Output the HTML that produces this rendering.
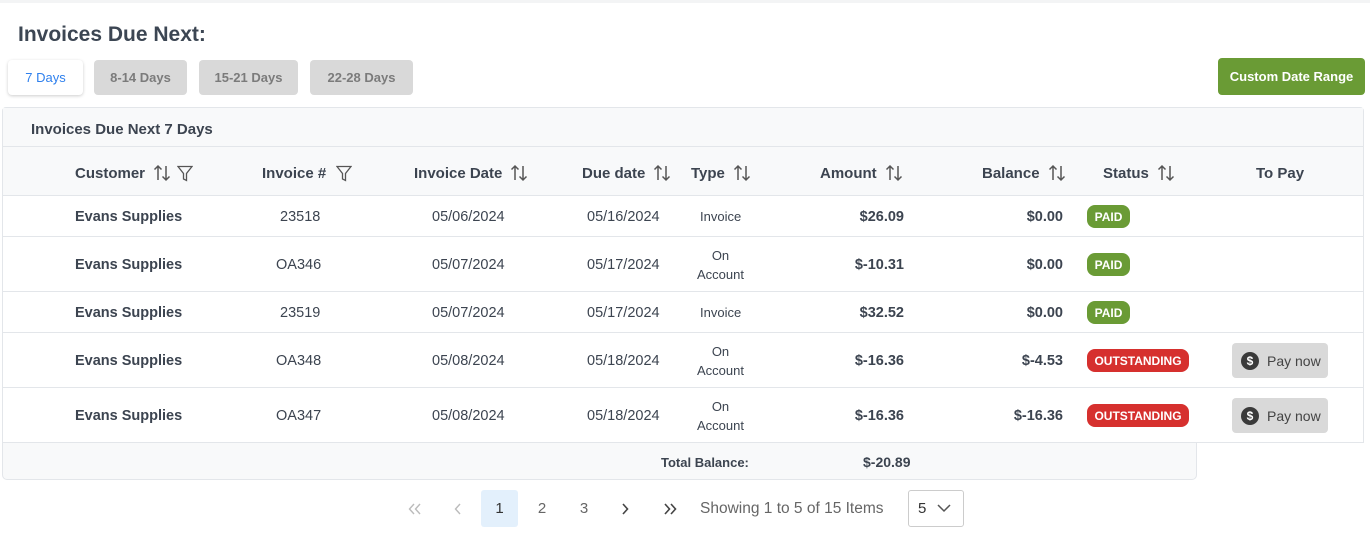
<!DOCTYPE html>
<html><head><meta charset="utf-8"><style>
*{box-sizing:border-box;margin:0;padding:0}
body{width:1370px;height:545px;background:#fff;font-family:"Liberation Sans","DejaVu Sans",sans-serif;color:#3c4450;position:relative;overflow:hidden;font-size:14px}
.a{position:absolute;white-space:nowrap}
.btn{position:absolute;top:60px;height:35px;border-radius:4px;background:#d9d9d9;color:#7b7b7b;font-size:13px;font-weight:bold;display:flex;align-items:center;justify-content:center}
.hline{position:absolute;left:2px;width:1362px;height:1px;background:#e3e6ea}
.th{position:absolute;top:163px;font-weight:bold;font-size:15px;color:#3c4450;white-space:nowrap;display:flex;align-items:center;height:20px}
.c{position:absolute;font-size:14.5px;white-space:nowrap;color:#3c4450}
.r{text-align:right}
.b{font-weight:bold}
.badge{position:absolute;left:1087px;height:23px;border-radius:8px;color:#fff;font-weight:bold;font-size:12px;display:flex;align-items:center;justify-content:center}
.paid{width:43px;background:#6a9b35}
.out{width:102px;background:#d6302e}
.pay{position:absolute;left:1232px;width:96px;height:35px;background:#d9d9d9;border-radius:4px;font-size:14px;color:#444;display:flex;align-items:center;padding-left:9px}
.dol{width:18px;height:18px;border-radius:50%;background:#3a3a3a;color:#fff;font-size:12px;font-weight:bold;display:flex;align-items:center;justify-content:center;margin-right:8px}
.pg{position:absolute;top:490px;height:37px;font-size:15px;color:#666;display:flex;align-items:center;justify-content:center}
svg.s{margin-left:8px}
</style></head><body>
<svg width="0" height="0" style="position:absolute"><defs>
<g id="sort"><path d="M5 16V2M1.5 5.5L5 2l3.5 3.5M13 2v14M9.5 12.5L13 16l3.5-3.5" fill="none" stroke="#555" stroke-width="1.5"/></g>
<g id="filt"><path d="M1 1.5h14L9.5 8.5v7l-3-1.5V8.5z" fill="none" stroke="#555" stroke-width="1.3"/></g>
</defs></svg>
<div class="a" style="left:0;top:0;width:1370px;height:3px;background:#f3f4f5"></div>
<div class="a" style="left:18px;top:23px;font-size:21px;font-weight:bold;color:#3c4653">Invoices Due Next:</div>
<div class="btn" style="left:8px;width:75px;background:#fff;color:#2f80ed;font-weight:normal;box-shadow:0 1px 3px rgba(0,0,0,.2)">7 Days</div>
<div class="btn" style="left:94px;width:93px">8-14 Days</div>
<div class="btn" style="left:199px;width:99px">15-21 Days</div>
<div class="btn" style="left:310px;width:103px">22-28 Days</div>
<div class="btn" style="left:1218px;top:58px;width:147px;height:37px;background:#6a9b35;color:#fff">Custom Date Range</div>

<div class="a" style="left:2px;top:107px;width:1362px;height:336px;border:1px solid #e3e6ea;border-radius:4px 4px 0 0"></div>
<div class="a" style="left:3px;top:108px;width:1360px;height:87px;background:#f8f9fa"></div>
<div class="a" style="left:31px;top:121px;font-weight:bold;font-size:15px;color:#3c4450">Invoices Due Next 7 Days</div>
<div class="hline" style="top:146px"></div>
<div class="hline" style="top:195px"></div>
<div class="hline" style="top:236px"></div>
<div class="hline" style="top:291px"></div>
<div class="hline" style="top:332px"></div>
<div class="hline" style="top:387px"></div>
<div class="hline" style="top:442px"></div>

<div class="th" style="left:75px">Customer <svg class="s" width="18" height="18"><use href="#sort"/></svg><svg width="16" height="17" style="margin-left:6px"><use href="#filt"/></svg></div>
<div class="th" style="left:262px">Invoice # <svg width="16" height="17" style="margin-left:10px"><use href="#filt"/></svg></div>
<div class="th" style="left:414px">Invoice Date <svg class="s" width="18" height="18"><use href="#sort"/></svg></div>
<div class="th" style="left:582px">Due date <svg class="s" width="18" height="18"><use href="#sort"/></svg></div>
<div class="th" style="left:691px">Type <svg class="s" width="18" height="18"><use href="#sort"/></svg></div>
<div class="th" style="left:820px">Amount <svg class="s" width="18" height="18"><use href="#sort"/></svg></div>
<div class="th" style="left:982px">Balance <svg class="s" width="18" height="18"><use href="#sort"/></svg></div>
<div class="th" style="left:1103px">Status <svg class="s" width="18" height="18"><use href="#sort"/></svg></div>
<div class="th" style="left:1256px">To Pay</div>

<div class="c b" style="left:75px;top:209px">Evans Supplies</div>
<div class="c" style="left:280px;top:209px">23518</div>
<div class="c" style="left:432px;top:209px">05/06/2024</div>
<div class="c" style="left:587px;top:209px">05/16/2024</div>
<div class="c" style="left:700px;top:209px;font-size:13px">Invoice</div>
<div class="c b r" style="right:466px;top:209px">$26.09</div>
<div class="c b r" style="right:307px;top:209px">$0.00</div>
<div class="badge paid" style="top:205px">PAID</div>

<div class="c b" style="left:75px;top:257px">Evans Supplies</div>
<div class="c" style="left:276px;top:257px">OA346</div>
<div class="c" style="left:432px;top:257px">05/07/2024</div>
<div class="c" style="left:587px;top:257px">05/17/2024</div>
<div class="c" style="left:697px;top:246px;font-size:13px;text-align:center;line-height:19px">On<br>Account</div>
<div class="c b r" style="right:466px;top:257px">$-10.31</div>
<div class="c b r" style="right:307px;top:257px">$0.00</div>
<div class="badge paid" style="top:253px">PAID</div>

<div class="c b" style="left:75px;top:305px">Evans Supplies</div>
<div class="c" style="left:280px;top:305px">23519</div>
<div class="c" style="left:432px;top:305px">05/07/2024</div>
<div class="c" style="left:587px;top:305px">05/17/2024</div>
<div class="c" style="left:700px;top:305px;font-size:13px">Invoice</div>
<div class="c b r" style="right:466px;top:305px">$32.52</div>
<div class="c b r" style="right:307px;top:305px">$0.00</div>
<div class="badge paid" style="top:301px">PAID</div>

<div class="c b" style="left:75px;top:353px">Evans Supplies</div>
<div class="c" style="left:276px;top:353px">OA348</div>
<div class="c" style="left:432px;top:353px">05/08/2024</div>
<div class="c" style="left:587px;top:353px">05/18/2024</div>
<div class="c" style="left:697px;top:342px;font-size:13px;text-align:center;line-height:19px">On<br>Account</div>
<div class="c b r" style="right:466px;top:353px">$-16.36</div>
<div class="c b r" style="right:307px;top:353px">$-4.53</div>
<div class="badge out" style="top:349px">OUTSTANDING</div>
<div class="pay" style="top:343px"><span class="dol">$</span>Pay now</div>

<div class="c b" style="left:75px;top:408px">Evans Supplies</div>
<div class="c" style="left:276px;top:408px">OA347</div>
<div class="c" style="left:432px;top:408px">05/08/2024</div>
<div class="c" style="left:587px;top:408px">05/18/2024</div>
<div class="c" style="left:697px;top:397px;font-size:13px;text-align:center;line-height:19px">On<br>Account</div>
<div class="c b r" style="right:466px;top:408px">$-16.36</div>
<div class="c b r" style="right:307px;top:408px">$-16.36</div>
<div class="badge out" style="top:404px">OUTSTANDING</div>
<div class="pay" style="top:398px"><span class="dol">$</span>Pay now</div>

<div class="a" style="left:2px;top:443px;width:1195px;height:37px;background:#f8f9fa;border:1px solid #e3e6ea;border-top:none;border-radius:0 0 5px 5px"></div>
<div class="c b" style="left:661px;top:455px;font-size:13px">Total Balance:</div>
<div class="c b" style="left:863px;top:454px;font-size:14px">$-20.89</div>

<div class="pg" style="left:400px;width:30px"><svg width="14" height="12"><path d="M6 1L1.5 6 6 11M12 1L7.5 6 12 11" fill="none" stroke="#bbb" stroke-width="1.4"/></svg></div>
<div class="pg" style="left:445px;width:25px"><svg width="8" height="12"><path d="M6 1L1.5 6 6 11" fill="none" stroke="#bbb" stroke-width="1.4"/></svg></div>
<div class="pg" style="left:481px;width:37px;background:#e3f0fc;border-radius:3px;color:#333">1</div>
<div class="pg" style="left:527px;width:30px">2</div>
<div class="pg" style="left:569px;width:30px">3</div>
<div class="pg" style="left:612px;width:25px"><svg width="8" height="12"><path d="M2 1l4.5 5L2 11" fill="none" stroke="#444" stroke-width="1.6"/></svg></div>
<div class="pg" style="left:655px;width:30px"><svg width="14" height="12"><path d="M2 1l4.5 5L2 11M8 1l4.5 5L8 11" fill="none" stroke="#444" stroke-width="1.6"/></svg></div>
<div class="pg" style="left:700px;width:200px;justify-content:flex-start;color:#666;font-size:15.5px">Showing 1 to 5 of 15 Items</div>
<div class="pg" style="left:908px;width:56px;border:1px solid #ccc;border-radius:3px;justify-content:flex-start;padding-left:9px;color:#333">5 <svg width="14" height="9" viewBox="0 0 14 9" style="margin-left:11px"><path d="M1 1l6 6 6-6" fill="none" stroke="#555" stroke-width="1.5"/></svg></div>
</body></html>
